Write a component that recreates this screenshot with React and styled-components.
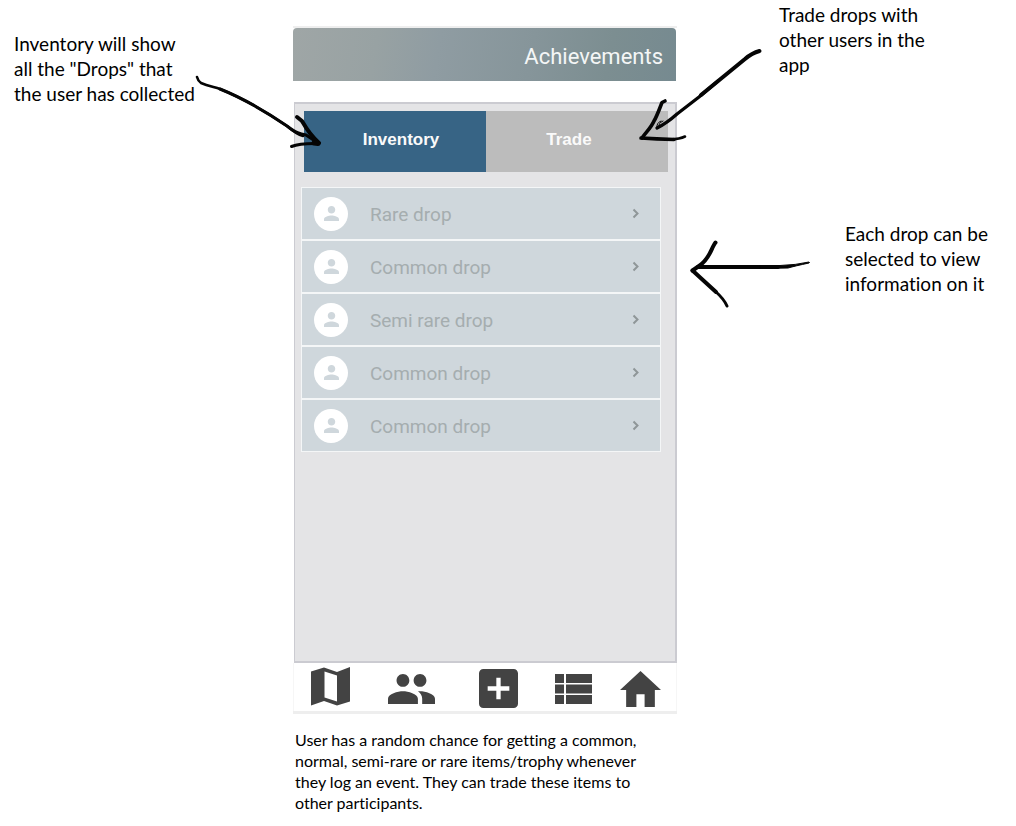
import React from "react";
import styled, { createGlobalStyle } from "styled-components";

const GlobalStyle = createGlobalStyle`
  * { box-sizing: border-box; }
  body { margin: 0; background: #fff; color: #000; }
  button { border: 0; padding: 0; background: none; font: inherit; cursor: pointer; }
`;

const Board = styled.main`
  display: grid;
  grid-template-columns: 293fr minmax(384px, 384fr) 339fr;
  align-items: start;
  padding-bottom: 12px;
  font-family: Lato, "Liberation Sans", sans-serif;
  font-variant-ligatures: none;
`;

const Note = styled.p`
  margin: 0;
  font-size: 19px;
  line-height: 25px;
  white-space: pre-line;
`;

const LeftNotes = styled.aside`
  padding: 31px 0 0 14px;
`;

const RightNotes = styled.aside`
  display: flex;
  flex-direction: column;
  gap: 144px;
  padding: 2px 0 0 102px;
`;

const IndentedNote = styled(Note)`
  padding-left: 66px;
`;

const Center = styled.section`
  padding-top: 26px;
`;

const Caption = styled.p`
  margin: 15px 0 0 2px;
  font-size: 16px;
  line-height: 21px;
  white-space: pre-line;
`;

const Phone = styled.div`
  position: relative;
  border: solid #eeeeee;
  border-width: 2px 0 3px;
  background: #fff;
`;

const Header = styled.header`
  display: flex;
  align-items: center;
  justify-content: flex-end;
  height: 53px;
  margin-right: 1px;
  padding: 4px 13px 0 0;
  border-radius: 4px 4px 0 0;
  background: linear-gradient(100deg, #9fa6a6 0%, #98a2a3 22%, #8f9ca2 38%, #86959a 62%, #7c8e91 82%, #768a90 100%);
`;

const Title = styled.h1`
  margin: 0;
  color: #f4f6f6;
  font: 400 22px/28px Roboto, sans-serif;
`;

const Panel = styled.div`
  display: flex;
  flex-direction: column;
  gap: 15px;
  min-height: 561px;
  margin: 21px 0 0 1px;
  padding: 7px 7px 0 6px;
  border: solid #cbcbd1;
  border-width: 2px 2px 2px 1px;
  background: #e4e4e6;
`;

const Tabs = styled.div`
  display: grid;
  grid-template-columns: 1fr 1fr;
  height: 61px;
  margin-left: 3px;
`;

const Tab = styled.button`
  padding: ${(p) => (p.$active ? "0 0 4px 12px" : "0 16px 4px 0")};
  background: ${(p) => (p.$active ? "#376485" : "#bcbcbc")};
  color: #fafafa;
  font: 700 17px/20px "Liberation Sans", Arial, sans-serif;
`;

const DropList = styled.ul`
  display: flex;
  flex-direction: column;
  gap: 2px;
  margin: 0 7px 0 0;
  padding: 1px;
  list-style: none;
  background: #f4f6f7;
`;

const DropRow = styled.button`
  display: flex;
  align-items: center;
  width: 100%;
  height: 51px;
  padding: 0 16px 0 12px;
  background: #cfd7dc;
`;

const Avatar = styled.span`
  display: grid;
  place-items: center;
  width: 34px;
  height: 34px;
  border-radius: 50%;
  background: #fff;
`;

const DropName = styled.span`
  flex: 1;
  margin-left: 22px;
  padding-top: 2px;
  color: #a5adaf;
  font: 400 19px/24px Roboto, sans-serif;
  text-align: left;
`;

const BottomNav = styled.nav`
  display: grid;
  grid-template-columns: 74fr 89fr 85fr 65fr 71fr;
  height: 48px;
  padding-top: 3px;
  border: solid #f6f6f6;
  border-width: 0 1px;
`;

const NavButton = styled.button`
  display: grid;
  place-items: center;
`;

const Arrow = styled.svg`
  position: absolute;
  fill: none;
  stroke: #050505;
  stroke-linecap: round;
  stroke-linejoin: round;
  pointer-events: none;
`;

const InventoryArrow = styled(Arrow)`
  top: 42px;
  left: -103px;
`;

const TradeArrow = styled(Arrow)`
  top: 12px;
  right: -93px;
`;

const DropArrow = styled(Arrow)`
  top: 202px;
  right: -143px;
`;

const drops = ["Rare drop", "Common drop", "Semi rare drop", "Common drop", "Common drop"];

const navItems = [
  { label: "Map", box: "0 0 40 43", w: 40, h: 43, d: "M0 4.500L13 0.500L26 5L39 0V34.500L26 38.500L13 34L0 38.500ZM13.500 4.500V30.500L26 34.500V8.500Z" },
  { label: "People", box: "1 5 22 14", w: 47, h: 30, d: "M16 11c1.660 0 2.990-1.340 2.990-3S17.660 5 16 5c-1.660 0-3 1.340-3 3s1.340 3 3 3zm-8 0c1.660 0 2.990-1.340 2.990-3S9.660 5 8 5C6.340 5 5 6.340 5 8s1.340 3 3 3zm0 2c-2.330 0-7 1.170-7 3.500V19h14v-2.500c0-2.330-4.670-3.500-7-3.500zm8 0c-.29 0-.62.02-.97.05 1.160.84 1.970 1.970 1.970 3.450V19h6v-2.500c0-2.330-4.670-3.500-7-3.500z" },
  { label: "Add", box: "3 3 18 18", w: 39, h: 39, d: "M19 3H5c-1.110 0-2 .9-2 2v14c0 1.100.89 2 2 2h14c1.100 0 2-.9 2-2V5c0-1.100-.9-2-2-2zm-2 10h-4v4h-2v-4H7v-2h4V7h2v4h4v2z" },
  { label: "List", box: "0 0 37 30", w: 37, h: 30, d: "M0 0H9V9H0ZM11 0H37V9H11ZM0 10.500H9V19.500H0ZM11 10.500H37V19.500H11ZM0 21H9V30H0ZM11 21H37V30H11Z" },
  { label: "Home", box: "2 3 20 17", w: 41, h: 36, d: "M10 20v-6h4v6h5v-8h3L12 3 2 12h3v8z" },
];

function PersonIcon() {
  return (
    <svg width="15" height="15" viewBox="4 4 16 16" fill="#cfd7dc" aria-hidden="true">
      <path d="M12 12c2.210 0 4-1.790 4-4s-1.790-4-4-4-4 1.790-4 4 1.790 4 4 4zm0 2c-2.670 0-8 1.340-8 4v2h16v-2c0-2.660-5.330-4-8-4z" />
    </svg>
  );
}

function ChevronIcon() {
  return (
    <svg width="16" height="16" viewBox="0 0 16 16" fill="none" stroke="#8f9698" strokeWidth="2" aria-hidden="true">
      <path d="M5.500 3.500L9.500 7.500L5.500 11.500" />
    </svg>
  );
}

function Arrows() {
  return (
    <>
      <InventoryArrow width="140" height="84" viewBox="190 70 140 84" aria-hidden="true">
        <path strokeWidth="2.600" d="M197 77Q198 81 201 83C208 86 214 87 220 89C240 97 262 109 287 126C294 132 298 135 303 136" />
        <path strokeWidth="3" d="M220 89C240 97 262 109 287 126C296 133 300 134 306 135L318 143" />
        <path strokeWidth="4" d="M297 117L302 121C306 128 309 134 319 143" />
        <path strokeWidth="3" d="M291.500 146.500Q300 143 319 143.500" />
        <path strokeWidth="5" d="M314 143L318 143.500" />
      </InventoryArrow>
      <TradeArrow width="140" height="110" viewBox="630 40 140 110" aria-hidden="true">
        <path strokeWidth="4" d="M759.500 51Q752 53 745 59L701 95" />
        <path strokeWidth="3.300" d="M718 81L699 97L677 114Q667 123 657 128" />
        <path strokeWidth="3.600" d="M665 101L662 102.500C659 110 657 116 654 121C651 128 646 132 642 138" />
        <path strokeWidth="3.600" d="M641 138Q656 139 674 139.500" />
        <path strokeWidth="2.600" d="M670 139.500Q680 139 685 136.500" />
        <path strokeWidth="1" d="M657 128Q656 123 661 121M659 127Q658 123 663 121" />
      </TradeArrow>
      <DropArrow width="130" height="80" viewBox="690 230 130 80" overflow="visible" aria-hidden="true">
        <path strokeWidth="4" d="M715.500 242.500C711 248 710 259 699 266L692.500 270.500" />
        <path strokeWidth="4" d="M698 267H778" />
        <path strokeWidth="1" fill="#050505" d="M760 265.500H780Q796 265 809 262Q810 262.500 809 263Q795 266 788 268L760 268.500Z" />
        <path strokeWidth="4" d="M692.500 270.500L716 292" />
        <path strokeWidth="3" d="M715 291Q724 299 727 306" />
      </DropArrow>
    </>
  );
}

export default function App() {
  return (
    <>
      <GlobalStyle />
      <Board>
        <LeftNotes>
          <Note>{'Inventory will show\nall the "Drops" that\nthe user has collected'}</Note>
        </LeftNotes>
        <Center>
          <Phone>
            <Header>
              <Title>Achievements</Title>
            </Header>
            <Panel>
              <Tabs role="tablist">
                <Tab role="tab" aria-selected="true" $active>Inventory</Tab>
                <Tab role="tab" aria-selected="false">Trade</Tab>
              </Tabs>
              <DropList>
                {drops.map((name, i) => (
                  <li key={i}>
                    <DropRow>
                      <Avatar><PersonIcon /></Avatar>
                      <DropName>{name}</DropName>
                      <ChevronIcon />
                    </DropRow>
                  </li>
                ))}
              </DropList>
            </Panel>
            <BottomNav>
              {navItems.map((item) => (
                <NavButton key={item.label} aria-label={item.label}>
                  <svg width={item.w} height={item.h} viewBox={item.box} preserveAspectRatio="none" fill="#434343" fillRule="evenodd" aria-hidden="true">
                    <path d={item.d} />
                  </svg>
                </NavButton>
              ))}
            </BottomNav>
            <Arrows />
          </Phone>
          <Caption>
            {"User has a random chance for getting a common,\nnormal, semi-rare or rare items/trophy whenever\nthey log an event. They can trade these items to\nother participants."}
          </Caption>
        </Center>
        <RightNotes>
          <Note>{"Trade drops with\nother users in the\napp"}</Note>
          <IndentedNote>{"Each drop can be\nselected to view\ninformation on it"}</IndentedNote>
        </RightNotes>
      </Board>
    </>
  );
}
